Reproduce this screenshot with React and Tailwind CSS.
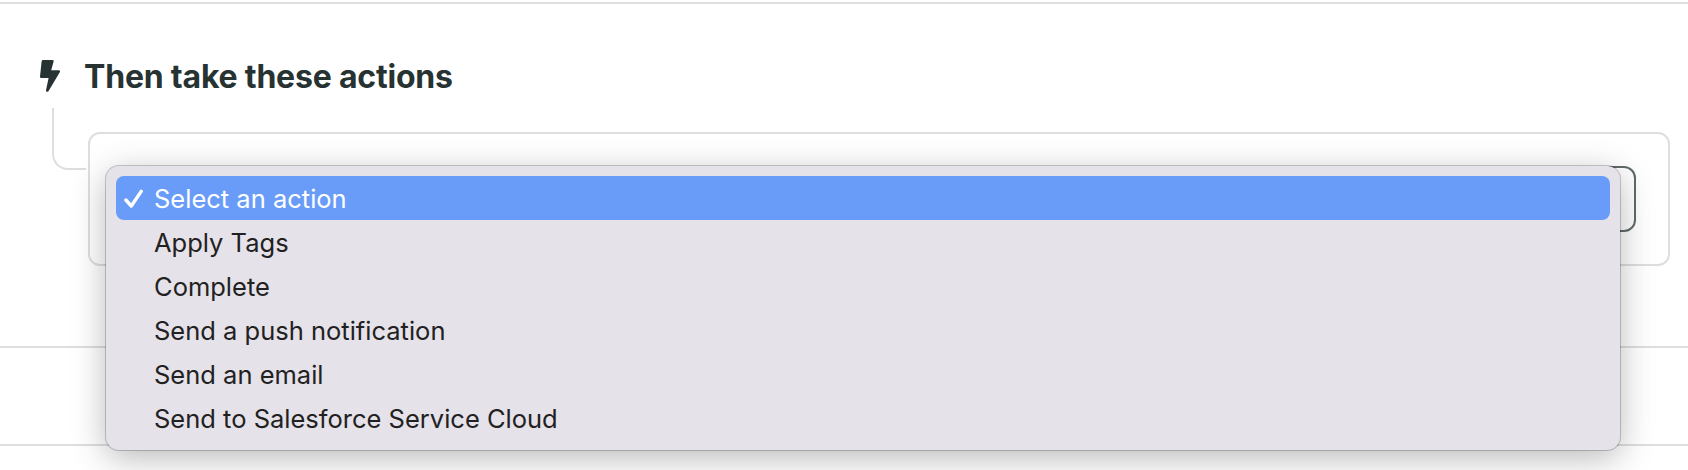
import React, { useState } from 'react';

const ACTIONS = [
  'Select an action',
  'Apply Tags',
  'Complete',
  'Send a push notification',
  'Send an email',
  'Send to Salesforce Service Cloud',
];

function BoltIcon() {
  return (
    <svg width="20" height="32" viewBox="0 0 20 32" fill="#273333" className="block shrink-0">
      <path d="M3.2 0H12.4Q14 0 13.6 1.5L11.2 10.2H18.8Q20.6 10.2 19.9 12L8.6 31Q8 32 7 31.8Q5.8 31.6 6 30.3L8.6 18H1.2Q-.1 18 0 16.7L1.6 1.4Q1.8 0 3.2 0Z" />
    </svg>
  );
}

function CheckIcon() {
  return (
    <svg width="20" height="20" viewBox="0 0 20 20" fill="none" stroke="currentColor" strokeWidth="3.4" strokeLinecap="round" strokeLinejoin="round" className="block">
      <path d="M1.9 11L7.3 17L17.2 2.4" />
    </svg>
  );
}

function ActionMenu({ selected, onSelect }) {
  return (
    <ul className="absolute top-0 right-4 -left-4 z-10 h-[284px] rounded-[13px] bg-[#e5e2e9] p-2.5 shadow-[0_0_0_1px_rgba(0,0,0,0.2),0_8px_34px_rgba(0,0,0,0.28)]">
      {ACTIONS.map(action => (
        <li
          key={action}
          onClick={() => onSelect(action)}
          className={`flex h-11 cursor-default items-center rounded-lg pt-0.5 text-[25.5px] leading-[42px] whitespace-nowrap ${action === selected ? 'bg-[#689cf8] text-white' : 'text-[#222122]'}`}
        >
          <span className="w-[38px] shrink-0 pl-2">{action === selected && <CheckIcon />}</span>
          {action}
        </li>
      ))}
    </ul>
  );
}

export default function App() {
  const [selected, setSelected] = useState(ACTIONS[0]);

  return (
    <div className="h-[470px] overflow-hidden bg-white pt-0.5 font-['Inter','Liberation_Sans',sans-serif]">
      <section className="h-[346px] border-y-2 border-[#dedede]">
        <div className="flex h-[104px] items-center pt-[49px] pb-[9px] pl-10">
          <BoltIcon />
          <h2 className="ml-6 pt-0.5 text-[32px] leading-[44px] font-bold tracking-[-0.2px] whitespace-nowrap text-[#273333]">Then take these actions</h2>
        </div>
        <div className="flex pr-[18px] pl-[52px]">
          <div className="h-[62px] w-[34px] shrink-0 rounded-bl-[16px] border-b-2 border-l-2 border-[#dedede]" />
          <div className="mt-6 ml-0.5 h-[134px] flex-1 rounded-xl border-2 border-[#dedede] p-8">
            <div className="relative">
              <div className="h-[66px] rounded-xl border-2 border-[#616b6b] bg-white" />
              <ActionMenu selected={selected} onSelect={setSelected} />
            </div>
          </div>
        </div>
      </section>
      <div className="h-[98px] border-b-2 border-[#dedede]" />
    </div>
  );
}
